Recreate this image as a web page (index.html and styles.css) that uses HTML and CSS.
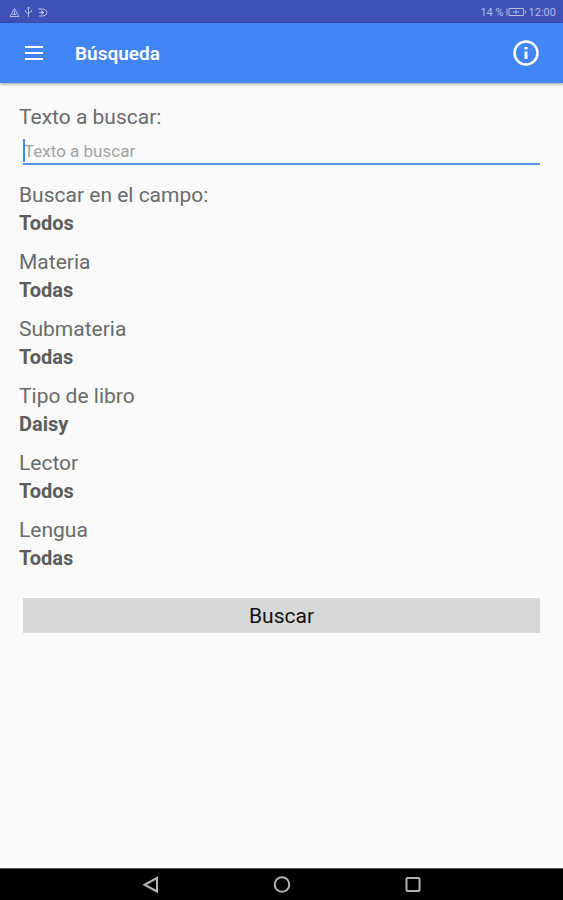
FILE: index.html
```html
<!DOCTYPE html>
<html lang="es">
<head>
  <meta charset="UTF-8" />
  <meta name="viewport" content="width=device-width, initial-scale=1.0" />
  <title>Búsqueda</title>
  <link rel="stylesheet" href="styles.css">
</head>
<body>
  <div class="status-bar">
    <div class="status-icons">
      <svg width="11" height="11" viewBox="0 0 11 11"><path d="M5.5 1.5 L10 9.5 H1 Z M5.5 4 V7 M3.5 7.5 H7.5" /></svg>
      <svg width="9" height="12" viewBox="0 0 9 12"><path d="M4.5 1 V11 M3 2.5 L4.5 1 L6 2.5 M1.5 4 V6 L4.5 8 M7.5 4 V5.5 L4.5 7" /></svg>
      <svg width="11" height="11" viewBox="0 0 11 11"><path d="M1 2 H6 Q9.5 2.5 10 5.5 Q9.5 8.5 6 9 H2 M2 5.5 H7 M4 7.5 L7 5.5 L4 3.5" /></svg>
    </div>
    <div class="status-info">
      <span>14 %</span>
      <svg width="21" height="10" viewBox="0 0 21 10"><path d="M3 1.5 H17.5 V8.5 H3 Z M1 1.5 V8.5 M19.5 3.5 V6.5 M7 5 H13 M10 3 V7" /></svg>
      <span>12:00</span>
    </div>
  </div>

  <header class="app-bar">
    <button class="icon-button" type="button" aria-label="Menú">
      <svg width="20" height="14" viewBox="0 0 20 14"><path d="M1 1 H19 M1 7 H19 M1 13 H19" /></svg>
    </button>
    <h1>Búsqueda</h1>
    <button class="icon-button" type="button" aria-label="Información">
      <svg width="26" height="26" viewBox="0 0 26 26"><circle cx="13" cy="13" r="11.5" /><path class="info-stem" d="M13 11.5 V19 M13 7 V9.5" /></svg>
    </button>
  </header>

  <main>
    <form class="search-form">
      <label for="search-text">Texto a buscar:</label>
      <div class="text-box">
        <input id="search-text" type="text" placeholder="Texto a buscar" />
      </div>

      <div class="filters">
        <button class="filter" type="button"><span>Buscar en el campo:</span><strong>Todos</strong></button>
        <button class="filter" type="button"><span>Materia</span><strong>Todas</strong></button>
        <button class="filter" type="button"><span>Submateria</span><strong>Todas</strong></button>
        <button class="filter" type="button"><span>Tipo de libro</span><strong>Daisy</strong></button>
        <button class="filter" type="button"><span>Lector</span><strong>Todos</strong></button>
        <button class="filter" type="button"><span>Lengua</span><strong>Todas</strong></button>
      </div>

      <button class="submit" type="submit">Buscar</button>
    </form>
  </main>

  <nav class="nav-bar">
    <button type="button" aria-label="Atrás">
      <svg width="18" height="18" viewBox="0 0 18 18"><path d="M15 2 V15.5 L2.5 8.75 Z" /></svg>
    </button>
    <button type="button" aria-label="Inicio">
      <svg width="18" height="18" viewBox="0 0 18 18"><circle cx="9" cy="8.5" r="7.3" /></svg>
    </button>
    <button type="button" aria-label="Recientes">
      <svg width="18" height="18" viewBox="0 0 18 18"><rect x="2.5" y="2" width="13" height="13" rx="1" /></svg>
    </button>
  </nav>
</body>
</html>
```
FILE: styles.css
```css
* {
  box-sizing: border-box;
}
body {
  margin: 0;
  min-height: 100vh;
  display: flex;
  flex-direction: column;
  background: #fafafa;
  font-family: Roboto, sans-serif;
  color: #6a6a6a;
}
button, input {
  margin: 0;
  padding: 0;
  border: none;
  background: none;
  font: inherit;
  color: inherit;
}
button {
  cursor: pointer;
}
svg {
  display: block;
  fill: none;
  stroke: currentColor;
}

/* Android status bar */
.status-bar {
  height: 23px;
  padding: 1px 7px 0 9px;
  display: flex;
  align-items: center;
  justify-content: space-between;
  background: #3f51b5;
  color: #b5bde6;
  font-size: 11px;
}
.status-icons {
  display: flex;
  align-items: center;
  gap: 4px;
}
.status-info {
  display: flex;
  align-items: center;
  gap: 2px;
}

.app-bar {
  height: 60px;
  padding: 0 24px;
  display: flex;
  align-items: center;
  background: #4286f6;
  color: #ffffff;
  box-shadow: 0 1px 3px rgba(0,0,0,0.4);
}
.app-bar h1 {
  flex: 1;
  margin: 0 0 0 31px;
  font-size: 19px;
  font-weight: 600;
}
.icon-button svg {
  stroke-width: 2;
}
.icon-button circle {
  stroke-width: 2.5;
}
.icon-button .info-stem {
  stroke-width: 3;
}

main {
  flex: 1;
  padding: 20px 19px;
}
.search-form {
  display: flex;
  flex-direction: column;
  font-size: 21px;
  line-height: 28px;
}
.text-box {
  position: relative;
  margin: 4px 4px 16px;
}
/* text cursor */
.text-box::before {
  content: '';
  position: absolute;
  top: 4px;
  left: 0;
  width: 2px;
  height: 23px;
  background: #4286f6;
}
.text-box input {
  display: block;
  width: 100%;
  height: 30px;
  padding: 4px 0 0 1px;
  border-bottom: 2px solid #5593ea;
  outline: none;
  font-size: 17px;
}
.text-box input::placeholder {
  color: #a3a3a3;
  opacity: 1;
}
.filters {
  display: flex;
  flex-direction: column;
  gap: 11px;
}
.filter {
  display: flex;
  flex-direction: column;
  text-align: left;
}
.filter strong {
  color: #5c5c5c;
  font-size: 20px;
}
.submit {
  height: 35px;
  margin: 26px 4px 0;
  background: #d6d8d7;
  color: #111111;
}

.nav-bar {
  height: 32px;
  display: flex;
  align-items: center;
  justify-content: center;
  gap: 113px;
  border-top: 1px solid #555555;
  background: #000000;
  color: #b4b4b4;
}
.nav-bar svg {
  stroke-width: 2;
}
```
